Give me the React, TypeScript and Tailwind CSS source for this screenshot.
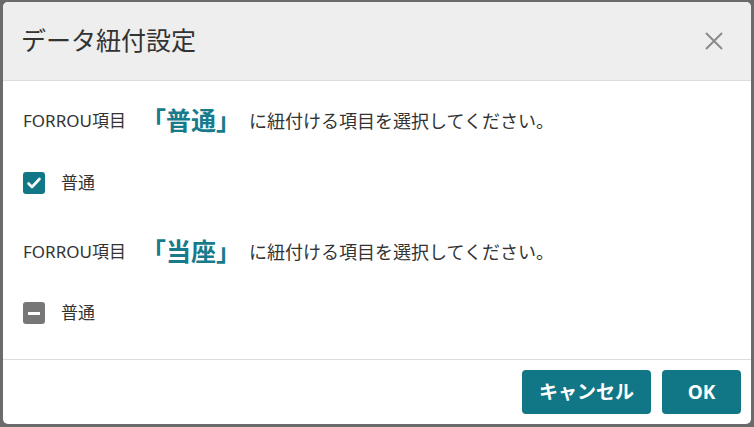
const font = { fontFamily: '"Noto Sans", "Noto Sans CJK JP", sans-serif' };

function Prompt({ item }: { item: string }) {
  return (
    <div className="flex h-12 items-center text-[#333]">
      <span className="text-[17px]">FORROU項目</span>
      <span className="ml-[15px] text-[25px] font-bold text-[#177b8c]">「{item}」</span>
      <span className="ml-2 text-[18px]">に紐付ける項目を選択してください。</span>
    </div>
  );
}

function CheckRow({ state }: { state: "checked" | "mixed" }) {
  return (
    <div className="flex h-12 items-center">
      {state === "checked" ? (
        <span className="flex h-[22px] w-[22px] items-center justify-center rounded-[3px] bg-[#117786]">
          <svg width="16" height="16" viewBox="0 0 16 16" fill="none">
            <path d="M2.5 8.5l3.5 3.5 7.5-8" stroke="#fff" strokeWidth="2.6" strokeLinecap="round" strokeLinejoin="round" />
          </svg>
        </span>
      ) : (
        <span className="flex h-[22px] w-[22px] items-center justify-center rounded-[3px] bg-[#777]">
          <span className="h-[3px] w-[12px] bg-white" />
        </span>
      )}
      <span className="ml-4 text-[17px] text-[#333]">普通</span>
    </div>
  );
}

export default function App() {
  return (
    <div className="h-[427px] w-[754px] bg-[#6b6b6b] pb-[3px] pl-[3px] pr-[3px] pt-[2px]" style={font}>
      <div className="flex h-full flex-col overflow-hidden rounded-[5px] bg-white">
        <div className="flex h-[79px] items-center justify-between border-b border-[#dcdcdc] bg-[#eeeeee] pl-[18px] pr-[28px]">
          <div className="text-[25px] text-[#333]">データ紐付設定</div>
          <svg width="18" height="18" viewBox="0 0 18 18" fill="none">
            <path d="M1 1l16 16M17 1L1 17" stroke="#8a8a8a" strokeWidth="2" />
          </svg>
        </div>

        <div className="flex-1 px-5 pt-4">
          <Prompt item="普通" />
          <div className="mt-[14px]">
            <CheckRow state="checked" />
          </div>
          <div className="mt-[21px]">
            <Prompt item="当座" />
          </div>
          <div className="mt-[13px]">
            <CheckRow state="mixed" />
          </div>
        </div>

        <div className="flex justify-end gap-[11px] border-t border-[#dcdcdc] px-[10px] py-[10px]">
          <button className="h-11 w-[129px] rounded-[4px] bg-[#117786] text-[19px] font-bold text-white">
            キャンセル
          </button>
          <button className="h-11 w-[79px] rounded-[4px] bg-[#117786] text-[19px] font-bold text-white">
            OK
          </button>
        </div>
      </div>
    </div>
  );
}
